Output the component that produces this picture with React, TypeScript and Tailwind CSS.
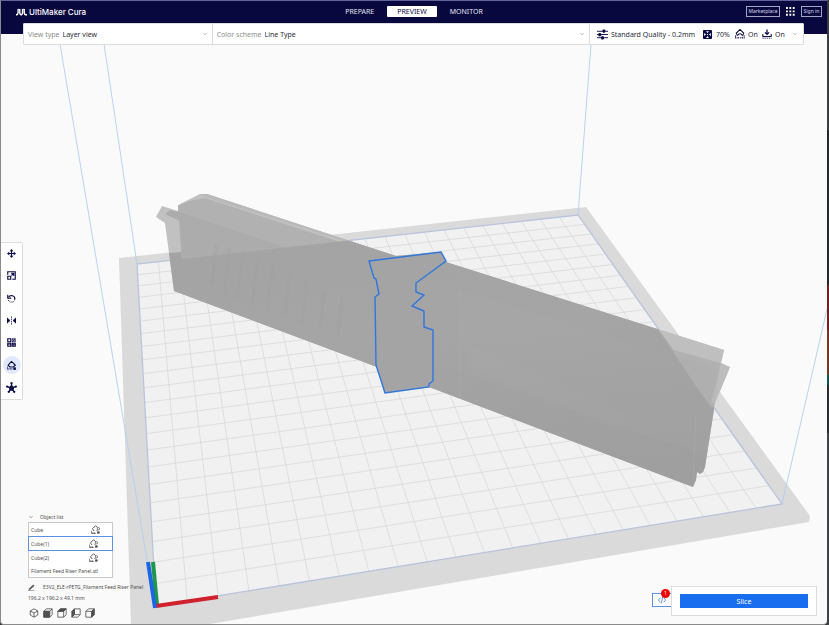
import type { ReactNode } from "react"
import { ChevronDown } from "lucide-react"

type Point = [number, number]

// Corners of the printable area in scene coordinates
const FRONT_LEFT: Point = [156, 606]
const FRONT_RIGHT: Point = [782, 504]
const BACK_RIGHT: Point = [578, 215]
const BACK_LEFT: Point = [137, 264]
const CELLS = 22

// Projects (u, v) in the unit square onto the build plate
function project(u: number, v: number): Point {
  const [x0, y0] = FRONT_LEFT
  const [x1, y1] = FRONT_RIGHT
  const [x2, y2] = BACK_RIGHT
  const [x3, y3] = BACK_LEFT
  const dx1 = x1 - x2
  const dx2 = x3 - x2
  const sx = x0 - x1 + x2 - x3
  const dy1 = y1 - y2
  const dy2 = y3 - y2
  const sy = y0 - y1 + y2 - y3
  const det = dx1 * dy2 - dx2 * dy1
  const g = (sx * dy2 - dx2 * sy) / det
  const h = (dx1 * sy - sx * dy1) / det
  const w = g * u + h * v + 1
  return [
    ((x1 - x0 + g * x1) * u + (x3 - x0 + h * x3) * v + x0) / w,
    ((y1 - y0 + g * y1) * u + (y3 - y0 + h * y3) * v + y0) / w,
  ]
}

function gridPath(cells: number) {
  let d = ""
  for (let i = 1; i < cells; i++) {
    const t = i / cells
    d += `M${project(t, 0)}L${project(t, 1)}M${project(0, t)}L${project(1, t)}`
  }
  return d
}

const SILHOUETTE =
  "156,217 162,206 178,211 178,205 200,194 207,194 396,256 441,252 446,262 724,350 721,363 730,367 715,403 705,467 703,472 700,474 697,472 696,480 693,487 429,387 385,393 377,367 174,291 165,223"

const SELECTED =
  "369,261 441,252 446,261 416,283 416,292 424,295 412,306 424,311 424,327 433,330 433,381 429,384 429,387 385,393 376,365 375,297 379,294 376,279 374,278"

function Scene() {
  return (
    <svg
      className="absolute inset-0 h-full w-full"
      viewBox="1 1 826 623"
      preserveAspectRatio="xMidYMid slice"
      aria-hidden="true"
    >
      <defs>
        <clipPath id="silhouette">
          <polygon points={SILHOUETTE} />
        </clipPath>
        <linearGradient id="panel" x1="0" y1="0" x2="0.25" y2="1">
          <stop offset="0" stopColor="#a3a3a3" />
          <stop offset="0.5" stopColor="#a5a5a5" />
          <stop offset="1" stopColor="#9f9f9f" />
        </linearGradient>
      </defs>

      {/* build plate */}
      <polygon points="119,258 586,207 810,516 809,522 204,625 131,625" fill="#dadada" />
      <polygon points="156,606 782,504 578,215 137,264" fill="#f1f1f1" />
      <path d={gridPath(CELLS)} stroke="#d5d5d5" strokeWidth="0.7" />
      <polygon points="156,606 782,504 578,215 137,264" fill="none" stroke="#b9c4dc" strokeWidth="1.3" />

      {/* build volume */}
      <path
        d="M60 44L148 566M104 44L137 264M591 44L578 215M827 309L782 504"
        fill="none"
        stroke="#b4cdf0"
        strokeWidth="0.9"
      />

      {/* models */}
      <g clipPath="url(#silhouette)">
        <rect x="150" y="190" width="590" height="310" fill="#c1c1c1" />
        <polygon points="178,206 189,201 205,198 396,260 396,380 182,262" fill="#b1b1b1" />
        <polygon points="207,192 400,254 400,259 200,195" fill="#b9b9b9" />
        <polygon points="165,214 170,210 179,212 287,248 182,262 180,221" fill="#acacac" />
        <polygon points="169,253 181,252 182,259 578,215 711,403 716,410 700,500 380,400 170,295" fill="url(#panel)" />
        <polygon points="655,325 672,349 721,363 715,403 712,408 700,392" fill="#b1b1b1" />
        <polygon points="655,325 726,347 721,363 674,350" fill="#bfbfbf" />
        <polygon points="711,403 719,404 730,367 721,363" fill="#bdbdbd" />
        <polygon points="458,288 720,370 707,455 458,372" fill="#ababab" opacity="0.2" />
        <polygon points="470,345 628,415 620,430 470,368" fill="#b0b0b0" opacity="0.15" />
        <path
          d="M216 245l-4 40M229 248l-5 44M243 251l-6 48M258 257l-6 48M273 263l-6 46M290 273l-5 42M307 283l-5 42M324 292l-4 36M342 297l-4 38"
          fill="none"
          stroke="#9c9c9c"
          strokeWidth="3"
          opacity="0.2"
        />
        <path d="M460 290V397M696 415L693 480" stroke="#acacac" strokeWidth="1" opacity="0.5" />
      </g>
      <polygon points={SELECTED} fill="#a4a4a4" stroke="#2f76dd" strokeWidth="1.4" />

      {/* origin axes */}
      <path d="M153 562L157 605" stroke="#1f9648" strokeWidth="4" />
      <path d="M156 606L218 597" stroke="#d0222c" strokeWidth="4" />
      <path d="M148 562L155 608" stroke="#1c66e5" strokeWidth="4" />
    </svg>
  )
}

function Icon({ children, className }: { children: ReactNode; className: string }) {
  return (
    <svg
      viewBox="0 0 24 24"
      className={`shrink-0 ${className}`}
      fill="none"
      stroke="currentColor"
      strokeWidth="2"
      aria-hidden="true"
    >
      {children}
    </svg>
  )
}

const tools = [
  {
    name: "Move",
    icon: (
      <>
        <path d="M12 4v16M4 12h16" strokeWidth="3" />
        <path d="M12 0l5 6H7zM12 24l5-6H7zM0 12l6-5v10zM24 12l-6-5v10z" fill="currentColor" stroke="none" />
      </>
    ),
  },
  {
    name: "Scale",
    icon: (
      <>
        <path d="M2 10V2h20v20h-8" strokeWidth="3" />
        <path d="M2 14h8v8H2zM12 12l6-6M11 6h7v7" strokeWidth="3" />
      </>
    ),
  },
  {
    name: "Rotate",
    icon: (
      <>
        <path d="M4 8c5-6 17-4 17 5" strokeWidth="3" />
        <path d="M21 13c0 10-14 12-18 3" strokeWidth="2.5" strokeDasharray="3 2.5" />
        <path d="M2 2v9h9" strokeWidth="3" />
      </>
    ),
  },
  {
    name: "Mirror",
    icon: (
      <>
        <path d="M0 5l8 7-8 7zM24 5l-8 7 8 7z" fill="currentColor" />
        <path d="M12 1v22" strokeDasharray="4 2" />
      </>
    ),
  },
  {
    name: "Per model settings",
    icon: (
      <>
        <path d="M2 2h8v8H2zM14 14h8v8h-8zM2 14h8v8H2z" strokeWidth="3" />
        <path d="M2 18h8M14 18h8M18 14v8M14 2l8 8M22 2l-8 8M14 2h8v8h-8z" strokeWidth="2" />
      </>
    ),
  },
  {
    name: "Support blocker",
    icon: (
      <>
        <path d="M8 16l-5-5 9-10 10 10-5 5z" strokeWidth="3" />
        <path d="M1 15v8M5 19v4M9 19v4M13 19v4" />
        <path d="M18 18h5v5h-5z" fill="currentColor" />
      </>
    ),
  },
  {
    name: "Mesh tools",
    icon: (
      <>
        <path d="M12 13V3M12 13L2 10M12 13l10-3M12 13L6 22M12 13l6 9" strokeWidth="3" />
        <path d="M12 7l5 5-2 6H9l-2-6z" fill="currentColor" />
        <g fill="currentColor" stroke="none">
          <circle cx="12" cy="2.500" r="2.500" />
          <circle cx="2.500" cy="10" r="2.500" />
          <circle cx="21.500" cy="10" r="2.500" />
          <circle cx="6" cy="21.500" r="2.500" />
          <circle cx="18" cy="21.500" r="2.500" />
        </g>
      </>
    ),
  },
]

const objects = [
  { name: "Cube", indent: "mr-[11px]", support: true },
  { name: "Cube(1)", indent: "mr-[13px]", support: true, selected: true },
  { name: "Cube(2)", indent: "mr-[13px]", support: true },
  { name: "Filament Feed Riser Panel.stl", indent: "", support: false },
]

const cube = "M3 7l9-5 9 5v10l-9 5-9-5z"
const box = "M2 8h14v14H2zM2 8l6-6h14v14l-6 6M16 8l6-6"

const views = [
  { name: "3D view", icon: <path d={`${cube}M3 7l9 5 9-5M12 12v10`} /> },
  {
    name: "Front view",
    icon: (
      <>
        <path d={box} />
        <path d="M2 8h14v14H2z" fill="currentColor" />
      </>
    ),
  },
  {
    name: "Top view",
    icon: (
      <>
        <path d={box} />
        <path d="M2 8l6-6h14l-6 6z" fill="currentColor" />
      </>
    ),
  },
  {
    name: "Left view",
    icon: (
      <>
        <path d="M8 2h14v14H8zM8 16l-6 6h14l6-6" />
        <path d="M2 8l6-6v14l-6 6z" fill="currentColor" />
      </>
    ),
  },
  {
    name: "Right view",
    icon: (
      <>
        <path d={box} />
        <path d="M16 8l6-6v14l-6 6z" fill="currentColor" />
      </>
    ),
  },
]

function Header() {
  return (
    <header className="relative grid h-[33px] grid-cols-[1fr_auto_1fr] items-start bg-[#08083f] px-[5px] text-white">
      <div className="flex h-[22px] items-center gap-[2px] pl-[10px]">
        <svg viewBox="0 0 32 22" className="h-2 w-[11px]" fill="none" stroke="currentColor" strokeWidth="4" aria-hidden="true">
          <path d="M0 19h2c3 0 4-3 4-7V2M11 2v10c0 5 1 7 4 7s4-2 4-7V2M24 2v10c0 5 1 7 4 7h4" />
          <path d="M6 3h5M19 3h5" strokeWidth="2" />
        </svg>
        <span className="font-[Inter,sans-serif] text-[8px] leading-[10px] font-medium">UltiMaker Cura</span>
      </div>
      <nav className="flex gap-[3px] pt-[5px]">
        <button className="h-[11px] px-[10px] text-[#e4e4f0]">PREPARE</button>
        <button className="h-[11px] rounded-[1px] bg-white px-[10px] text-[#08083f]">PREVIEW</button>
        <button className="h-[11px] px-[10px] text-[#e4e4f0]">MONITOR</button>
      </nav>
      <div className="flex items-center justify-end gap-[6px] pt-[5px] text-[5px] text-[#d8d8ea]">
        <button className="flex h-[11px] w-[34px] items-center justify-center border border-[#a4a4c4]">
          Marketplace
        </button>
        <button aria-label="Applications" className="text-white">
          <svg viewBox="0 0 24 24" className="size-[9px]" fill="currentColor" aria-hidden="true">
            <path d="M0 0h5v5H0zM9 0h5v5H9zM18 0h5v5h-5zM0 9h5v5H0zM9 9h5v5H9zM18 9h5v5h-5zM0 18h5v5H0zM9 18h5v5H9zM18 18h5v5h-5z" />
          </svg>
        </button>
        <button className="flex h-[11px] w-[21px] items-center justify-center border border-[#a4a4c4]">
          Sign in
        </button>
      </div>
    </header>
  )
}

function StageMenu() {
  return (
    <div className="relative mr-[23px] ml-[22px] -mt-[11px] grid h-[22px] grid-cols-[1fr_2fr_213px] rounded-[1px] border border-[#dcdcdc] bg-white text-[#2c2c38]">
      <div className="relative flex min-w-0 items-center gap-[3px] border-r border-[#dcdcdc] pl-1">
        <label htmlFor="view-type" className="text-[#8c8c8c]">View type</label>
        <select id="view-type" className="h-full flex-1 appearance-none outline-none">
          <option>Layer view</option>
          <option>Solid view</option>
        </select>
        <ChevronDown className="pointer-events-none absolute right-1 size-[6px] text-[#707070]" />
      </div>
      <div className="relative flex min-w-0 items-center gap-[3px] border-r border-[#dcdcdc] pl-1">
        <label htmlFor="color-scheme" className="text-[#8c8c8c]">Color scheme</label>
        <select id="color-scheme" className="h-full flex-1 appearance-none outline-none">
          <option>Line Type</option>
          <option>Speed</option>
        </select>
        <ChevronDown className="pointer-events-none absolute right-1 size-[6px] text-[#707070]" />
      </div>
      <button className="flex items-center pr-[5px] pl-[7px] whitespace-nowrap">
        <Icon className="mr-[3px] size-[11px] text-[#0b0b46]">
          <path d="M0 5h24M0 12h24M0 19h24" />
          <path d="M13 2h4v5h-4zM4 10h4v5H4zM10 17h4v5h-4z" fill="currentColor" />
        </Icon>
        <span className="w-[92px] text-left">Standard Quality - 0.2mm</span>
        <Icon className="mr-1 size-[9px] text-[#0b0b46]">
          <rect width="24" height="24" rx="2" fill="currentColor" stroke="none" />
          <path d="M8 3h8l-4 5zM8 21h8l-4-5zM3 8v8l5-4zM21 8v8l-5-4z" fill="white" stroke="none" />
          <path d="M12 10l2 2-2 2-2-2z" fill="white" stroke="none" />
        </Icon>
        <span className="w-[19px] text-left">70%</span>
        <Icon className="mr-[3px] size-[10px] text-[#0b0b46]">
          <path d="M6 16l-3-6 9-9 9 9-3 6M7 15c2-5 8-5 10 0" strokeWidth="2.5" />
          <path d="M1 15v8M5 19v4M9 19v4M14 19v4M18 19v4M22 15v8" />
        </Icon>
        <span className="w-[14px] text-left">On</span>
        <Icon className="mr-[3px] size-[10px] text-[#0b0b46]">
          <path d="M12 1v12M7 8l5 5 5-5" strokeWidth="3" />
          <path d="M2 12v6h20v-6" strokeWidth="2.5" />
          <path d="M1 22h22" strokeDasharray="3 2" />
        </Icon>
        <span>On</span>
        <ChevronDown className="ml-auto size-[6px] text-[#707070]" />
      </button>
    </div>
  )
}

function Toolbar() {
  return (
    <div className="grid h-[158px] w-[22px] auto-rows-fr rounded-r-[2px] border border-l-0 border-[#dcdcdc] bg-white text-[#0b0b46]">
      {tools.map((tool) => (
        <button key={tool.name} aria-label={tool.name} className="flex items-center justify-center">
          <span
            className={
              tool.name === "Support blocker"
                ? "flex size-[18px] items-center justify-center rounded-full bg-[#dfe9fb]"
                : "flex size-[18px] items-center justify-center"
            }
          >
            <Icon className={tool.name === "Mesh tools" ? "size-[11px]" : "size-[9px]"}>{tool.icon}</Icon>
          </span>
        </button>
      ))}
    </div>
  )
}

function ObjectList() {
  return (
    <section className="ml-[27px] text-[5px] leading-[8px] text-[#505050]">
      <button className="flex h-[10px] items-center gap-[6px]">
        <ChevronDown className="size-[6px]" />
        Object list
      </button>
      <ul className="w-[85px] border border-[#c9c9c9] bg-white">
        {objects.map((object) => (
          <li key={object.name}>
            <button
              className={
                object.selected
                  ? "-mx-px flex h-[15px] w-[85px] items-center justify-between border border-[#5c90e0] pr-px pl-[2px]"
                  : "flex h-[13px] w-full items-center justify-between pr-px pl-[2px]"
              }
            >
              <span>{object.name}</span>
              {object.support && (
                <Icon className={`size-[9px] ${object.indent}`}>
                  <path d="M8 16l-4-6 8-8 6 5" strokeWidth="2.5" />
                  <path d="M14 14h4M1 15v8h12M5 19v4M9 19v4" />
                  <circle cx="20" cy="10" r="3" />
                  <path d="M17 18h5v4h-5z" fill="currentColor" />
                </Icon>
              )}
            </button>
          </li>
        ))}
      </ul>
      <div className="mt-[3px] flex h-3 items-center gap-2">
        <button aria-label="Rename project">
          <Icon className="size-[7px]">
            <path d="M5 15L18 3l3 3L8 18l-5 2z" fill="currentColor" />
            <path d="M0 23h22" />
          </Icon>
        </button>
        <span className="whitespace-nowrap">E3V2_ELE-rPETG_Filament Feed Riser Panel</span>
      </div>
      <p className="h-[10px] leading-[10px]">196.2 x 196.2 x 49.1 mm</p>
      <div className="mt-[5px] flex gap-1 pb-[6px] pl-px">
        {views.map((view) => (
          <button key={view.name} aria-label={view.name}>
            <Icon className="size-[10px]">{view.icon}</Icon>
          </button>
        ))}
      </div>
    </section>
  )
}

function ActionPanel() {
  return (
    <div className="mr-[10px] mb-2 flex items-center">
      <button
        aria-label="Post-processing scripts, 1 active"
        className="relative -mr-px mt-[-3px] flex h-[14px] w-5 items-center justify-center border border-[#5c90e0] bg-white text-[#1f62cf]"
      >
        <Icon className="size-[8px]">
          <path d="M7 5l-6 7 6 7M17 5l6 7-6 7M14 2l-4 20" />
        </Icon>
        <span className="absolute -top-[5px] right-[1px] flex size-[9px] items-center justify-center rounded-full bg-[#f00000] text-[5px] text-white">
          1
        </span>
      </button>
      <div className="relative border border-[#dcdcdc] bg-white px-2 py-[7px]">
        <button className="block h-[14px] w-32 bg-[#196ef0] text-white">Slice</button>
      </div>
    </div>
  )
}

export default function App() {
  return (
    <div className="flex min-h-screen bg-[#303133] font-['Noto_Sans',sans-serif] text-[7px] leading-[9px]">
      <div className="relative flex min-w-0 flex-1 flex-col overflow-hidden rounded-b-[4px] border-t border-b border-l border-t-[#62629a] border-b-[#8a8a8a] border-l-[#8a8a8a] bg-[#fafafa]">
        <Scene />
        <Header />
        <StageMenu />
        <main className="relative flex flex-1 flex-col">
          <div className="flex flex-1 items-center pt-[84px]">
            <Toolbar />
          </div>
          <div className="flex items-end justify-between">
            <ObjectList />
            <ActionPanel />
          </div>
        </main>
      </div>
      {/* desktop showing past the window edge */}
      <div className="flex w-[2px] flex-col">
        <div className="flex-[130] bg-[#3b3d42]" />
        <div className="flex-[155] bg-[#262829]" />
        <div className="flex-[45] bg-[#6e2222]" />
        <div className="flex-[45] bg-[#6b3a22]" />
        <div className="flex-[10] bg-[#0b574a]" />
        <div className="flex-[48] bg-[#2a2b2c]" />
        <div className="flex-[192] bg-[#414345]" />
      </div>
    </div>
  )
}
